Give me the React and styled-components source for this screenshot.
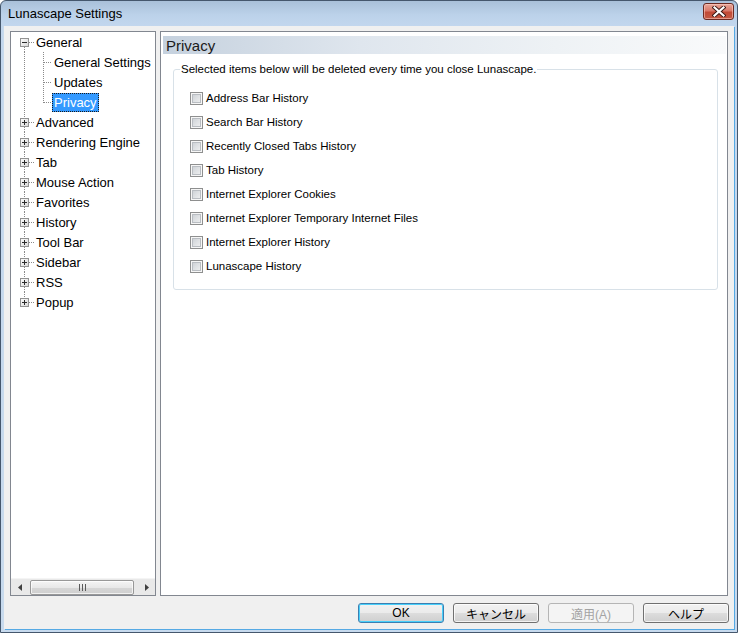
import React from 'react';
import styled, { createGlobalStyle } from 'styled-components';

const Global = createGlobalStyle`
  html, body { margin: 0; padding: 0; background: #ffffff; }
  body { font-family: "Liberation Sans", Arial, sans-serif; }
  * { box-sizing: border-box; }
`;

const Window = styled.div`
  width: 738px;
  height: 633px;
  display: flex;
  flex-direction: column;
  border: 1px solid #45576d;
  border-radius: 6px 6px 0 0;
  background: linear-gradient(180deg, #a9c0d9 0px, #bcd2ea 14px, #c3d7ee 26px, #c7daee 100%);
  overflow: hidden;
`;

const TitleBar = styled.div`
  height: 25px;
  flex: none;
  display: flex;
  align-items: center;
  justify-content: space-between;
  padding: 0 3px 0 7px;
`;

const Title = styled.span`
  font-family: "Liberation Sans", Arial, sans-serif;
  font-size: 13px;
  color: #000;
  margin-top: -1px;
`;

const CloseButton = styled.div`
  width: 31px;
  height: 17px;
  margin-top: -4px;
  border: 1px solid #6b2a22;
  border-radius: 3px;
  background: linear-gradient(180deg, #e8a799 0%, #d9796a 45%, #c24a36 55%, #c35a45 100%);
  box-shadow: inset 0 0 0 1px rgba(255, 210, 200, 0.55);
  display: flex;
  align-items: center;
  justify-content: center;
`;

const Client = styled.div`
  flex: 1;
  min-height: 0;
  display: flex;
  flex-direction: column;
  background: #f0f0f0;
  margin: 0 3px 3px 3px;
  padding: 5px 6px 6px 6px;
  box-shadow: 1px 1px 0 #55a9e4, -1px 0 0 #c9dbed;
`;

const Main = styled.div`
  flex: 1;
  min-height: 0;
  display: flex;
  gap: 4px;
`;

const TreePanel = styled.div`
  width: 146px;
  flex: none;
  display: flex;
  flex-direction: column;
  border: 1px solid #828790;
  background: #fff;
`;

const TreeList = styled.div`
  flex: 1;
  display: flex;
  flex-direction: column;
`;

const TreeRow = styled.div`
  height: 20px;
  display: flex;
  align-items: center;
`;

const TreeLabel = styled.span`
  font-family: "Liberation Sans", Arial, sans-serif;
  font-size: 13px;
  line-height: 17px;
  height: 19px;
  padding: 1px 2px 0 2px;
  white-space: nowrap;
  color: ${p => (p.$selected ? '#fff' : '#000')};
  background: ${p => (p.$selected ? '#3399ff' : 'transparent')};
  outline: ${p => (p.$selected ? '1px dotted #1a1a1a' : 'none')};
  outline-offset: -1px;
`;

const ScrollBar = styled.div`
  height: 17px;
  flex: none;
  display: flex;
  background: #e9e9e9;
  border-top: 1px solid #f4f4f4;
`;

const ScrollArrow = styled.div`
  width: 17px;
  flex: none;
  display: flex;
  align-items: center;
  justify-content: center;
`;

const ScrollTrack = styled.div`
  flex: 1;
  display: flex;
  align-items: center;
  padding: 0 2px;
`;

const Thumb = styled.div`
  width: 104px;
  height: 15px;
  border: 1px solid #989898;
  border-radius: 2px;
  background: linear-gradient(180deg, #f4f4f4 0%, #e8e8e8 50%, #d6d6d6 51%, #cfcfcf 100%);
  box-shadow: inset 0 0 0 1px rgba(255, 255, 255, 0.7);
  display: flex;
  align-items: center;
  justify-content: center;
`;

const ContentPanel = styled.div`
  flex: 1;
  min-width: 0;
  display: flex;
  flex-direction: column;
  border: 1px solid #828790;
  background: #fff;
  padding: 4px 1px 0 2px;
`;

const Header = styled.div`
  height: 18px;
  flex: none;
  display: flex;
  align-items: center;
  padding-left: 3px;
  background: linear-gradient(90deg, #c5d1de 0%, #dfe6ee 35%, #eef2f5 70%, #f9fafb 100%);
  font-family: "Liberation Sans", Arial, sans-serif;
  font-size: 15px;
  color: #1a1a1a;
`;

const GroupBox = styled.fieldset`
  margin: 8px 8px 0 10px;
  padding: 10px 0 11px 0;
  border: 1px solid #d8e1e8;
  border-radius: 3px;
  display: flex;
  flex-direction: column;
  min-width: 0;
`;

const Legend = styled.legend`
  margin-left: 6px;
  padding: 0 1px;
  font-family: "Liberation Sans", Arial, sans-serif;
  font-size: 11.5px;
  line-height: 14px;
  color: #000;
`;

const CheckRow = styled.label`
  height: 24px;
  display: flex;
  align-items: center;
  gap: 3px;
  padding-left: 16px;
  font-family: "Liberation Sans", Arial, sans-serif;
  font-size: 11.5px;
  color: #000;
`;

const CheckBox = styled.span`
  width: 13px;
  height: 13px;
  flex: none;
  border: 1px solid #8e8f8f;
  background: linear-gradient(135deg, #c6cacf 0%, #dcdfe2 45%, #f4f4f4 100%);
  box-shadow: inset 0 0 0 1px #f6f6f6, inset 0 0 0 2px #b9bdc2;
`;

const ButtonRow = styled.div`
  flex: none;
  display: flex;
  justify-content: flex-end;
  gap: 9px;
  margin-top: 7px;
  margin-right: -1px;
  height: 20px;
`;

const Button = styled.div`
  width: 86px;
  height: 20px;
  display: flex;
  align-items: center;
  justify-content: center;
  border-radius: 3px;
  font-family: "Liberation Sans", "Noto Sans CJK JP", sans-serif;
  font-size: 12px;
  color: ${p => (p.$disabled ? '#a3a3a3' : '#000')};
  border: 1px solid ${p => (p.$default ? '#3c7fb1' : p.$disabled ? '#b5b5b5' : '#707070')};
  background: ${p =>
    p.$disabled
      ? '#f4f4f4'
      : 'linear-gradient(180deg, #f2f2f2 0%, #ebebeb 50%, #dddddd 51%, #cfcfcf 100%)'};
  box-shadow: ${p =>
    p.$default
      ? 'inset 0 0 0 1px #48d0fb'
      : p.$disabled
      ? 'none'
      : 'inset 0 0 0 1px rgba(255,255,255,0.75)'};
`;

const DOT = '1 1';

function RootConnector({ first, last, expanded }) {
  return (
    <svg width="23" height="20" shapeRendering="crispEdges" style={{ flex: 'none' }}>
      <defs>
        <linearGradient id="boxg" x1="0" y1="0" x2="1" y2="1">
          <stop offset="0" stopColor="#ffffff" />
          <stop offset="1" stopColor="#d6d6d6" />
        </linearGradient>
      </defs>
      {!first && <line x1="13.5" y1="0" x2="13.5" y2="6" stroke="#8a8a8a" strokeDasharray={DOT} />}
      {!last && <line x1="13.5" y1="15" x2="13.5" y2="20" stroke="#8a8a8a" strokeDasharray={DOT} />}
      <line x1="18" y1="10.5" x2="23" y2="10.5" stroke="#8a8a8a" strokeDasharray={DOT} />
      <rect x="9.5" y="6.5" width="8" height="8" fill="url(#boxg)" stroke="#929292" />
      <line x1="11" y1="10.5" x2="16" y2="10.5" stroke="#2b2b2b" />
      {!expanded && <line x1="13.5" y1="8" x2="13.5" y2="13" stroke="#2b2b2b" />}
    </svg>
  );
}

function ChildConnector({ last }) {
  return (
    <svg width="41" height="20" shapeRendering="crispEdges" style={{ flex: 'none' }}>
      <line x1="13.5" y1="0" x2="13.5" y2="20" stroke="#8a8a8a" strokeDasharray={DOT} />
      <line x1="32.5" y1="0" x2="32.5" y2={last ? 11 : 20} stroke="#8a8a8a" strokeDasharray={DOT} />
      <line x1="33" y1="10.5" x2="41" y2="10.5" stroke="#8a8a8a" strokeDasharray={DOT} />
    </svg>
  );
}

const roots = [
  { label: 'General', expanded: true, children: ['General Settings', 'Updates', 'Privacy'] },
  { label: 'Advanced' },
  { label: 'Rendering Engine' },
  { label: 'Tab' },
  { label: 'Mouse Action' },
  { label: 'Favorites' },
  { label: 'History' },
  { label: 'Tool Bar' },
  { label: 'Sidebar' },
  { label: 'RSS' },
  { label: 'Popup' },
];

const items = [
  'Address Bar History',
  'Search Bar History',
  'Recently Closed Tabs History',
  'Tab History',
  'Internet Explorer Cookies',
  'Internet Explorer Temporary Internet Files',
  'Internet Explorer History',
  'Lunascape History',
];

function Tree() {
  const rows = [];
  roots.forEach((r, i) => {
    rows.push(
      <TreeRow key={r.label}>
        <RootConnector first={i === 0} last={i === roots.length - 1} expanded={!!r.expanded} />
        <TreeLabel>{r.label}</TreeLabel>
      </TreeRow>
    );
    if (r.expanded) {
      r.children.forEach((c, j) => {
        rows.push(
          <TreeRow key={c}>
            <ChildConnector last={j === r.children.length - 1} />
            <TreeLabel $selected={c === 'Privacy'}>{c}</TreeLabel>
          </TreeRow>
        );
      });
    }
  });
  return <TreeList>{rows}</TreeList>;
}

export default function App() {
  return (
    <>
      <Global />
      <Window>
        <TitleBar>
          <Title>Lunascape Settings</Title>
          <CloseButton>
            <svg width="14" height="11" viewBox="0 0 14 11">
              <path
                d="M2.5 1.5 L11.5 9.5 M11.5 1.5 L2.5 9.5"
                stroke="#3a1a16"
                strokeWidth="4"
                strokeLinecap="square"
              />
              <path
                d="M2.5 1.5 L11.5 9.5 M11.5 1.5 L2.5 9.5"
                stroke="#ffffff"
                strokeWidth="2.2"
                strokeLinecap="square"
              />
            </svg>
          </CloseButton>
        </TitleBar>
        <Client>
          <Main>
            <TreePanel>
              <Tree />
              <ScrollBar>
                <ScrollArrow>
                  <svg width="4" height="7" viewBox="0 0 4 7">
                    <path d="M4 0 L0 3.5 L4 7 Z" fill="#404040" />
                  </svg>
                </ScrollArrow>
                <ScrollTrack>
                  <Thumb>
                    <svg width="7" height="7" shapeRendering="crispEdges">
                      <path d="M0.5 0 V7 M3.5 0 V7 M6.5 0 V7" stroke="#5a5a5a" />
                    </svg>
                  </Thumb>
                </ScrollTrack>
                <ScrollArrow>
                  <svg width="4" height="7" viewBox="0 0 4 7">
                    <path d="M0 0 L4 3.5 L0 7 Z" fill="#404040" />
                  </svg>
                </ScrollArrow>
              </ScrollBar>
            </TreePanel>
            <ContentPanel>
              <Header>Privacy</Header>
              <GroupBox>
                <Legend>Selected items below will be deleted every time you close Lunascape.</Legend>
                {items.map(t => (
                  <CheckRow key={t}>
                    <CheckBox />
                    {t}
                  </CheckRow>
                ))}
              </GroupBox>
            </ContentPanel>
          </Main>
          <ButtonRow>
            <Button $default>OK</Button>
            <Button>キャンセル</Button>
            <Button $disabled>適用(A)</Button>
            <Button>ヘルプ</Button>
          </ButtonRow>
        </Client>
      </Window>
    </>
  );
}
